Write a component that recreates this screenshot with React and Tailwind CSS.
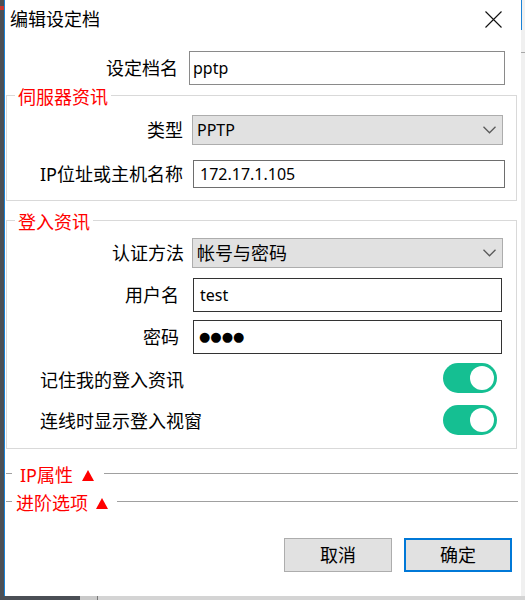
import React from 'react';

const Chevron = () => (
  <svg width="13" height="8" viewBox="0 0 13 8" className="ml-auto mr-[6px]">
    <path d="M0.5 0.8 L6.5 6.8 L12.5 0.8" fill="none" stroke="#5a5a5a" strokeWidth="1.3" />
  </svg>
);

const Select = ({ children, className }) => (
  <div className={`h-[30px] w-[311px] bg-[#e1e1e1] border border-[#adadad] flex items-center pl-[4px] ${className}`}>
    {children}
    <Chevron />
  </div>
);

const Toggle = () => (
  <div className="w-[54px] h-[30px] rounded-full bg-[#15bf92] flex items-center justify-end pr-[3px]">
    <div className="w-[24px] h-[24px] rounded-full bg-white" />
  </div>
);

const Triangle = () => (
  <svg width="12" height="11" viewBox="0 0 12 11">
    <polygon points="6,0 12,11 0,11" fill="#ff0000" />
  </svg>
);

const App = () => {
  return (
    <div className="w-[525px] h-[600px] overflow-hidden flex flex-col bg-[#4b4f55] text-black font-['Noto_Sans','Noto_Sans_CJK_SC',sans-serif]">
      <div className="flex h-[596px]">
        {/* desktop behind the dialog */}
        <div className="w-[4px] flex flex-col">
          <div className="h-[6px]" />
          <div className="h-[4px] bg-[#c8362e]" />
        </div>

        <div className="w-[517px] border-l border-[#1a82d6] bg-white flex flex-col">
          {/* title bar */}
          <div className="h-[38px] flex items-center pl-[5px]">
            <span className="text-[18px] leading-[22px]">编辑设定档</span>
            <svg width="17" height="17" viewBox="0 0 17 17" className="ml-auto mr-[19px]">
              <path d="M0.5 0.5 L16.5 16.5 M16.5 0.5 L0.5 16.5" stroke="#111" strokeWidth="1.1" />
            </svg>
          </div>

          <div className="mt-[13px] flex items-center h-[34px]">
            <div className="w-[173px] text-right text-[18px] leading-[22px]">设定档名</div>
            <div className="ml-[11px] w-[316px] h-[34px] border border-[#8a8a8a] flex items-center pl-[3px] text-[16px]">
              pptp
            </div>
          </div>

          {/* server group */}
          <fieldset className="-mt-[2px] ml-[1px] w-[511px] border border-[#d9d9d9] pb-[12px]">
            <legend className="ml-[8px] px-[3px] pt-[4px] text-[18px] leading-[20px] text-[#ff0000]">伺服器资讯</legend>
            <div className="mt-[8px] flex items-center h-[30px]">
              <div className="w-[176px] text-right text-[18px] leading-[22px]">类型</div>
              <Select className="ml-[9px] text-[16px]">PPTP</Select>
            </div>
            <div className="mt-[15px] flex items-center h-[28px]">
              <div className="w-[176px] text-right text-[18px] leading-[22px]">IP位址或主机名称</div>
              <div className="ml-[10px] w-[312px] h-[28px] border border-[#6e6e6e] flex items-center pl-[6px] text-[16px]">
                172.17.1.105
              </div>
            </div>
          </fieldset>

          {/* login group */}
          <fieldset className="mt-[7px] ml-[1px] w-[511px] border border-[#d9d9d9] pb-[13px]">
            <legend className="ml-[8px] px-[3px] pt-[4px] text-[18px] leading-[20px] text-[#ff0000]">登入资讯</legend>
            <div className="mt-[6px] flex items-center h-[30px]">
              <div className="w-[177px] text-right text-[18px] leading-[22px]">认证方法</div>
              <Select className="ml-[8px] text-[18px] leading-[22px]">帐号与密码</Select>
            </div>
            <div className="mt-[10px] flex items-center h-[34px]">
              <div className="w-[172px] text-right text-[18px] leading-[22px]">用户名</div>
              <div className="ml-[14px] w-[309px] h-[34px] border border-[#333] flex items-center pl-[6px] text-[16px]">
                test
              </div>
            </div>
            <div className="mt-[8px] flex items-center h-[34px]">
              <div className="w-[172px] text-right text-[18px] leading-[22px]">密码</div>
              <div className="ml-[14px] w-[309px] h-[34px] border border-[#333] flex items-center pl-[5px] text-[13px] tracking-[0px] font-['DejaVu_Sans',sans-serif]">
                ●●●●
              </div>
            </div>
            <div className="mt-[9px] flex items-center h-[30px] pl-[33px] pr-[19px]">
              <span className="text-[18px] leading-[22px] mt-[3px]">记住我的登入资讯</span>
              <div className="ml-auto"><Toggle /></div>
            </div>
            <div className="mt-[12px] flex items-center h-[30px] pl-[33px] pr-[19px]">
              <span className="text-[18px] leading-[22px] mt-[1px]">连线时显示登入视窗</span>
              <div className="ml-auto"><Toggle /></div>
            </div>
          </fieldset>

          {/* collapsed sections */}
          <div className="mt-[16px] flex items-center h-[20px] pl-[1px] pr-[3px]">
            <div className="w-[6px] h-px bg-[#a0a0a0] mb-[3px]" />
            <span className="ml-[8px] text-[18px] leading-[20px] text-[#ff0000]">IP属性</span>
            <span className="ml-[9px]"><Triangle /></span>
            <div className="ml-[10px] flex-1 h-px bg-[#a0a0a0] mb-[3px]" />
          </div>
          <div className="mt-[8px] flex items-center h-[20px] pl-[1px] pr-[3px]">
            <div className="w-[6px] h-px bg-[#a0a0a0] mb-[3px]" />
            <span className="ml-[4px] text-[18px] leading-[20px] text-[#ff0000]">进阶选项</span>
            <span className="ml-[8px]"><Triangle /></span>
            <div className="ml-[9px] flex-1 h-px bg-[#a0a0a0] mb-[3px]" />
          </div>

          <div className="mt-[25px] flex justify-end gap-[12px] pr-[9px]">
            <button className="w-[108px] h-[34px] bg-[#e1e1e1] border border-[#adadad] text-[18px] leading-[22px]">取消</button>
            <button className="w-[108px] h-[34px] bg-[#e1e1e1] border-2 border-[#0078d7] text-[18px] leading-[22px]">确定</button>
          </div>
        </div>

        <div className="w-[4px] flex flex-col bg-[#f0f0f0]">
          <div className="h-[30px] border-l border-[#1a82d6]" />
          <div className="h-[22px]" />
          <div className="h-px bg-[#a8a8a8]" />
        </div>
      </div>

      <div className="h-[4px] flex">
        <div className="w-[80px] bg-[#4b4f55]" />
        <div className="w-[17px] bg-[#c9c9c9]" />
        <div className="w-px bg-[#777]" />
        <div className="flex-1 bg-[#d4d4d4]" />
      </div>
    </div>
  );
};

export default App;
